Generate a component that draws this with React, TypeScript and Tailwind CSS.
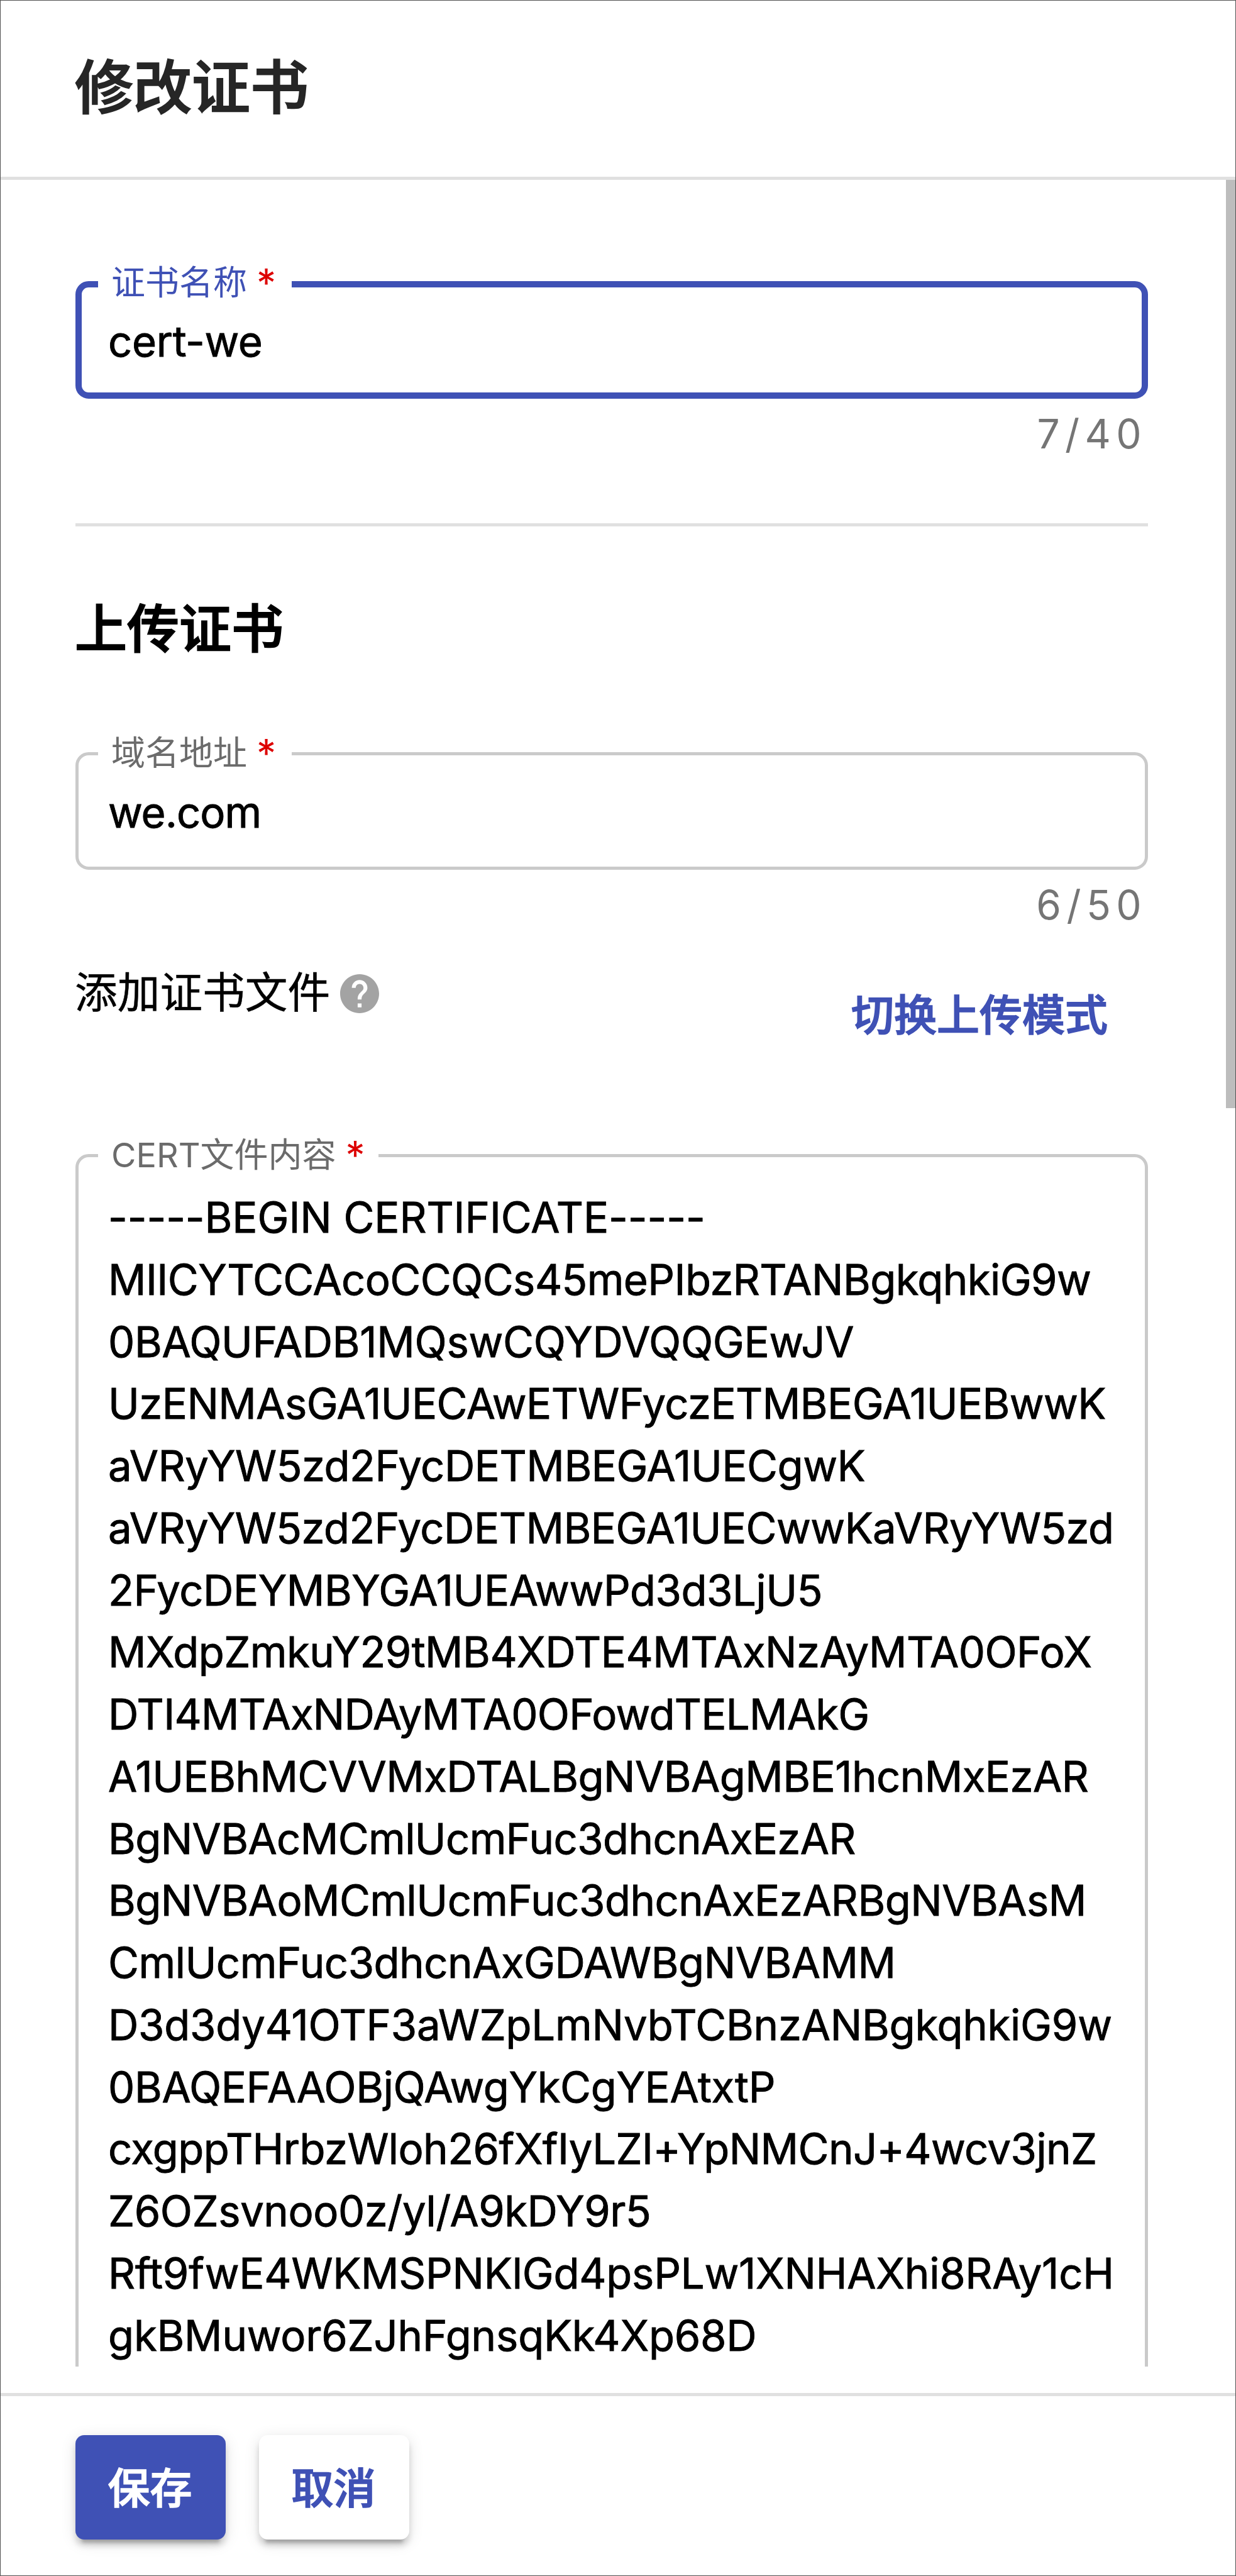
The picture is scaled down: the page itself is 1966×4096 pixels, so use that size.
import type { ReactNode } from 'react';

const CERT_LINES = [
  { text: '-----BEGIN CERTIFICATE-----', tracking: 'tracking-[-0.1px]' },
  { text: 'MIICYTCCAcoCCQCs45mePIbzRTANBgkqhkiG9w', tracking: 'tracking-[-0.58px]' },
  { text: '0BAQUFADB1MQswCQYDVQQGEwJV', tracking: 'tracking-[-0.3px]' },
  { text: 'UzENMAsGA1UECAwETWFyczETMBEGA1UEBwwK', tracking: 'tracking-[-0.58px]' },
  { text: 'aVRyYW5zd2FycDETMBEGA1UECgwK', tracking: 'tracking-[-0.47px]' },
  { text: 'aVRyYW5zd2FycDETMBEGA1UECwwKaVRyYW5zd', tracking: 'tracking-[-0.53px]' },
  { text: '2FycDEYMBYGA1UEAwwPd3d3LjU5', tracking: 'tracking-[-0.43px]' },
  { text: 'MXdpZmkuY29tMB4XDTE4MTAxNzAyMTA0OFoX', tracking: 'tracking-[-0.54px]' },
  { text: 'DTI4MTAxNDAyMTA0OFowdTELMAkG', tracking: 'tracking-[-0.74px]' },
  { text: 'A1UEBhMCVVMxDTALBgNVBAgMBE1hcnMxEzAR', tracking: 'tracking-[-0.54px]' },
  { text: 'BgNVBAcMCmlUcmFuc3dhcnAxEzAR', tracking: 'tracking-[-0.6px]' },
  { text: 'BgNVBAoMCmlUcmFuc3dhcnAxEzARBgNVBAsM', tracking: 'tracking-[-0.54px]' },
  { text: 'CmlUcmFuc3dhcnAxGDAWBgNVBAMM', tracking: 'tracking-[-0.47px]' },
  { text: 'D3d3dy41OTF3aWZpLmNvbTCBnzANBgkqhkiG9w', tracking: 'tracking-[-0.24px]' },
  { text: '0BAQEFAAOBjQAwgYkCgYEAtxtP', tracking: 'tracking-[-0.35px]' },
  { text: 'cxgppTHrbzWloh26fXfIyLZI+YpNMCnJ+4wcv3jnZ', tracking: 'tracking-[-0.57px]' },
  { text: 'Z6OZsvnoo0z/yl/A9kDY9r5', tracking: 'tracking-[-0.45px]' },
  { text: 'Rft9fwE4WKMSPNKlGd4psPLw1XNHAXhi8RAy1cH', tracking: 'tracking-[-0.23px]' },
  { text: 'gkBMuwor6ZJhFgnsqKk4Xp68D', tracking: 'tracking-[-0.2px]' },
];

function Label({ text, className }: { text: string; className: string }) {
  return (
    <legend className={`flex h-[60px] whitespace-nowrap text-[54px] ${className}`}>
      {text}
      <span className="ml-[15px] text-[62px] text-[#dd0000]">*</span>
    </legend>
  );
}

function Counter({ children }: { children: ReactNode }) {
  return (
    <div className="pr-[2px] pt-[16px] text-right text-[64px] leading-[80px] tracking-[8.4px] text-[#757575]">
      {children}
    </div>
  );
}

function HelpIcon() {
  return (
    <svg viewBox="2 2 20 20" className="ml-[16px] mt-[11px] size-[62px] fill-[#a3a3a3]">
      <path d="M12 2C6.48 2 2 6.48 2 12s4.48 10 10 10 10-4.48 10-10S17.52 2 12 2zm1 17h-2v-2h2v2zm2.07-7.75l-.9.92C13.45 12.9 13 13.5 13 15h-2v-.5c0-1.1.45-2.1 1.17-2.83l1.24-1.26c.37-.36.59-.86.59-1.41 0-1.1-.9-2-2-2s-2 .9-2 2H8c0-2.21 1.79-4 4-4s4 1.79 4 4c0 .88-.36 1.68-.93 2.25z" />
    </svg>
  );
}

const BUTTON =
  'h-[166px] w-[239px] rounded-[14px] pr-[2px] pt-[3px] text-[67px] font-medium leading-none [-webkit-text-stroke:1.6px] shadow-[0_15px_5px_-10px_rgba(0,0,0,0.2),0_10px_10px_0_rgba(0,0,0,0.14),0_5px_25px_0_rgba(0,0,0,0.12)]';

export default function App() {
  return (
    <div className="flex h-[4096px] w-[1966px] flex-col overflow-hidden border border-[#515151] bg-white font-['Inter','Noto_Sans_CJK_SC',sans-serif] text-black">
      <header className="flex h-[285px] shrink-0 items-center border-b-[5px] border-[#e0e0e0] pb-[4px] pl-[118px]">
        <h1 className="text-[93px] font-medium leading-none text-[#262626] [-webkit-text-stroke:2px]">修改证书</h1>
      </header>

      <div className="flex h-[3477px] shrink-0 justify-between overflow-hidden">
        <main className="ml-[119px] w-[1706px]">
          <fieldset className="mt-[136px] h-[212px] rounded-[21px] border-[10px] border-[#3f51b5]">
            <Label text="证书名称" className="ml-[26px] w-[308px] pl-[21px] leading-[55px] text-[#3f51b5]" />
            <div className="pl-[42px] pt-[12px] text-[67px] leading-[98px] tracking-[-0.3px] [-webkit-text-stroke:0.9px]">
              cert-we
            </div>
          </fieldset>
          <div className="h-[198px]">
            <Counter>7/40</Counter>
          </div>

          <section className="border-t-[5px] border-[#e0e0e0]">
            <h2 className="-ml-px h-[331px] pt-[113px] text-[83px] font-medium leading-[100px] [-webkit-text-stroke:2px]">
              上传证书
            </h2>
            <fieldset className="h-[215px] rounded-[21px] border-[5px] border-[#cacaca]">
              <Label text="域名地址" className="ml-[31px] w-[308px] pl-[21px] leading-[60px] text-[#6b6b6b]" />
              <div className="pl-[47px] pt-[15px] text-[67px] leading-[98px] tracking-[-1px] [-webkit-text-stroke:0.9px]">
                we.com
              </div>
            </fieldset>
            <div className="h-[153px]">
              <Counter>6/50</Counter>
            </div>
            <div className="flex h-[271px] items-start justify-between">
              <div className="-ml-px mt-[2px] flex text-[67.7px] leading-[80px]">
                <span className="[-webkit-text-stroke:0.5px]">添加证书文件</span>
                <HelpIcon />
              </div>
              <button className="mr-[64px] mt-[38px] text-[68px] font-medium leading-[80px] text-[#3f51b5] [-webkit-text-stroke:1.6px]">
                切换上传模式
              </button>
            </div>
            <fieldset className="h-[2100px] rounded-[21px] border-[5px] border-[#cacaca]">
              <Label text="CERT文件内容" className="ml-[31px] w-[446px] pl-[21px] leading-[60px] text-[#6b6b6b]" />
              <div className="pl-[47px] pt-[20px] text-[67px] leading-[98.77px] [-webkit-text-stroke:0.9px]">
                {CERT_LINES.map(({ text, tracking }) => (
                  <div key={text} className={`whitespace-nowrap ${tracking}`}>
                    {text}
                  </div>
                ))}
              </div>
            </fieldset>
          </section>
        </main>
        <div className="h-[1476px] w-[15px] bg-[#bdbdbd]" />
      </div>

      <footer className="mt-[42px] flex flex-1 items-start gap-[53px] border-t-[5px] border-[#e0e0e0] pl-[119px] pt-[62px]">
        <button className={`${BUTTON} bg-[#3f51b5] text-white`}>保存</button>
        <button className={`${BUTTON} bg-white text-[#3f51b5]`}>取消</button>
      </footer>
    </div>
  );
}
